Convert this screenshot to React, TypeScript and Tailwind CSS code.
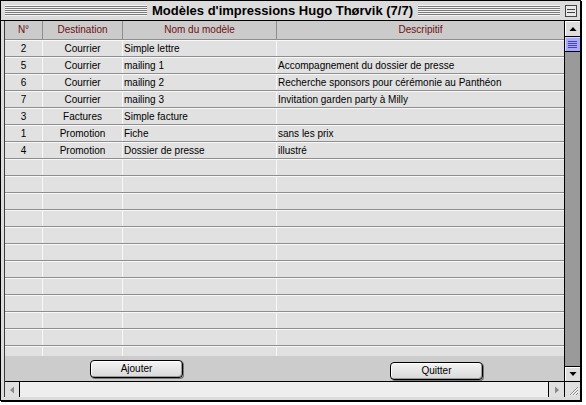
const rows = [
  { n: "2", dest: "Courrier", nom: "Simple lettre", desc: "" },
  { n: "5", dest: "Courrier", nom: "mailing 1", desc: "Accompagnement du dossier de presse" },
  { n: "6", dest: "Courrier", nom: "mailing 2", desc: "Recherche sponsors pour cérémonie au Panthéon" },
  { n: "7", dest: "Courrier", nom: "mailing 3", desc: "Invitation garden party à Milly" },
  { n: "3", dest: "Factures", nom: "Simple facture", desc: "" },
  { n: "1", dest: "Promotion", nom: "Fiche", desc: "sans les prix" },
  { n: "4", dest: "Promotion", nom: "Dossier de presse", desc: "illustré" },
];

const empty = Array.from({ length: 14 }, () => ({ n: "", dest: "", nom: "", desc: "" }));

function Stripes() {
  return (
    <div className="h-[11px] flex-1 bg-[repeating-linear-gradient(to_bottom,#f4f4f4_0px,#f4f4f4_1px,#7a7a7a_1px,#7a7a7a_2px)]" />
  );
}

function Arrow({ dir, color = "#000" }: { dir: "up" | "down" | "left" | "right"; color?: string }) {
  const pts = {
    up: "0.5,5 7.5,5 4,1",
    down: "0.5,1 7.5,1 4,5",
    left: "5,0.5 5,7.5 1,4",
    right: "1,0.5 1,7.5 5,4",
  }[dir];
  const vertical = dir === "up" || dir === "down";
  return (
    <svg width={vertical ? 8 : 6} height={vertical ? 6 : 8} viewBox={vertical ? "0 0 8 6" : "0 0 6 8"}>
      <polygon points={pts} fill={color} />
    </svg>
  );
}

function MacButton({ label }: { label: string }) {
  return (
    <button className="h-[18px] w-[93px] rounded-[4px] border border-black bg-[linear-gradient(#f4f4f4,#d8d8d8)] text-[10px] leading-[16px] text-black shadow-[inset_-1px_-1px_0_#999,inset_1px_1px_0_#fff,1px_1px_0_#777]">
      {label}
    </button>
  );
}

function Row({ r }: { r: { n: string; dest: string; nom: string; desc: string } }) {
  return (
    <div className="flex h-[17px] shrink-0 border-b border-[#8e8e8e] bg-[#e1e1e1] shadow-[inset_0_1px_0_#f8f8f8] text-[10px] leading-[17px] text-black">
      <div className="w-[38px] border-r border-[#f8f8f8] text-center">{r.n}</div>
      <div className="w-[80px] border-r border-[#f8f8f8] text-center">{r.dest}</div>
      <div className="w-[154px] border-r border-[#f8f8f8] pl-[1px]">{r.nom}</div>
      <div className="flex-1 pl-[1px] whitespace-nowrap">{r.desc}</div>
    </div>
  );
}

export default function App() {
  return (
    <div className="h-[405px] w-[586px] overflow-hidden bg-white font-['Liberation_Sans',Arial,sans-serif]">
      <div className="flex h-[401px] w-[581px] flex-col border border-black bg-[#dcdcdc] shadow-[1px_1px_0_#000]">
        {/* title bar */}
        <div className="flex h-[20px] shrink-0 items-center border-b border-black pl-[4px] pr-[2px]">
          <Stripes />
          <div className="px-[5px] text-[13px] font-bold leading-none text-black">
            Modèles d'impressions Hugo Thørvik (7/7)
          </div>
          <Stripes />
          <div className="ml-[5px] mr-[1px] flex h-[12px] w-[12px] flex-col justify-center gap-[2px] border border-[#444] bg-[#e8e8e8] px-[1px]">
            <div className="h-px bg-[#444]" />
            <div className="h-px bg-[#444]" />
          </div>
        </div>

        {/* content */}
        <div className="flex min-h-0 flex-1 flex-col pb-[3px] pl-[3px]">
          <div className="flex min-h-0 flex-1 flex-col border-l border-[#3a3a3a]">
            <div className="flex min-h-0 flex-1">
              {/* table */}
              <div className="flex min-h-0 min-w-0 flex-1 flex-col">
                <div className="flex h-[19px] shrink-0 border-b border-[#8e8e8e] bg-[#cbcbcb] text-[10px] leading-[18px] text-[#6e1010]">
                  <div className="w-[38px] border-r border-[#8e8e8e] text-center">N°</div>
                  <div className="w-[80px] border-r border-[#8e8e8e] text-center">Destination</div>
                  <div className="w-[154px] border-r border-[#8e8e8e] text-center">Nom du modèle</div>
                  <div className="flex-1 text-center">Descripitif</div>
                </div>
                <div className="flex min-h-0 flex-1 flex-col overflow-hidden bg-[#e1e1e1]">
                  {rows.concat(empty).map((r, i) => (
                    <Row key={i} r={r} />
                  ))}
                </div>
                <div className="flex h-[25px] shrink-0 items-center bg-[#cccccc] pl-[85px]">
                  <MacButton label="Ajouter" />
                  <div className="ml-[207px]">
                    <MacButton label="Quitter" />
                  </div>
                </div>
              </div>

              {/* vertical scrollbar */}
              <div className="flex w-[16px] shrink-0 flex-col border-l border-black bg-[#9a9a9a]">
                <div className="flex h-[16px] items-center justify-center border-b border-black bg-[#dddddd] shadow-[inset_1px_1px_0_#fff]">
                  <Arrow dir="up" />
                </div>
                <div className="flex h-[15px] flex-col justify-center gap-[1px] border-b border-black bg-[#a8a8ff] px-[3px] shadow-[inset_1px_1px_0_#d8d8ff]">
                  <div className="h-px bg-[#4444aa]" />
                  <div className="h-px bg-[#4444aa]" />
                  <div className="h-px bg-[#4444aa]" />
                  <div className="h-px bg-[#4444aa]" />
                </div>
                <div className="flex-1" />
                <div className="flex h-[15px] items-center justify-center border-t border-black bg-[#dddddd] shadow-[inset_1px_1px_0_#fff]">
                  <Arrow dir="down" />
                </div>
              </div>
            </div>

            {/* horizontal scrollbar */}
            <div className="flex h-[16px] shrink-0 border-t border-black">
              <div className="flex w-[15px] items-center justify-center border-r border-black bg-[#e0e0e0]">
                <Arrow dir="left" color="#8a8a8a" />
              </div>
              <div className="flex-1 bg-[#eeeeee]" />
              <div className="flex w-[16px] items-center justify-center border-l border-black bg-[#e0e0e0]">
                <Arrow dir="right" color="#8a8a8a" />
              </div>
              <div className="flex w-[16px] items-center justify-center border-l border-black bg-[#e0e0e0]">
                <svg width="12" height="12" viewBox="0 0 12 12">
                  <line x1="11" y1="3" x2="3" y2="11" stroke="#8a8a8a" />
                  <line x1="11" y1="6" x2="6" y2="11" stroke="#8a8a8a" />
                  <line x1="11" y1="9" x2="9" y2="11" stroke="#8a8a8a" />
                  <line x1="11" y1="4" x2="4" y2="11" stroke="#fff" />
                  <line x1="11" y1="7" x2="7" y2="11" stroke="#fff" />
                </svg>
              </div>
            </div>
          </div>
        </div>
      </div>
    </div>
  );
}
